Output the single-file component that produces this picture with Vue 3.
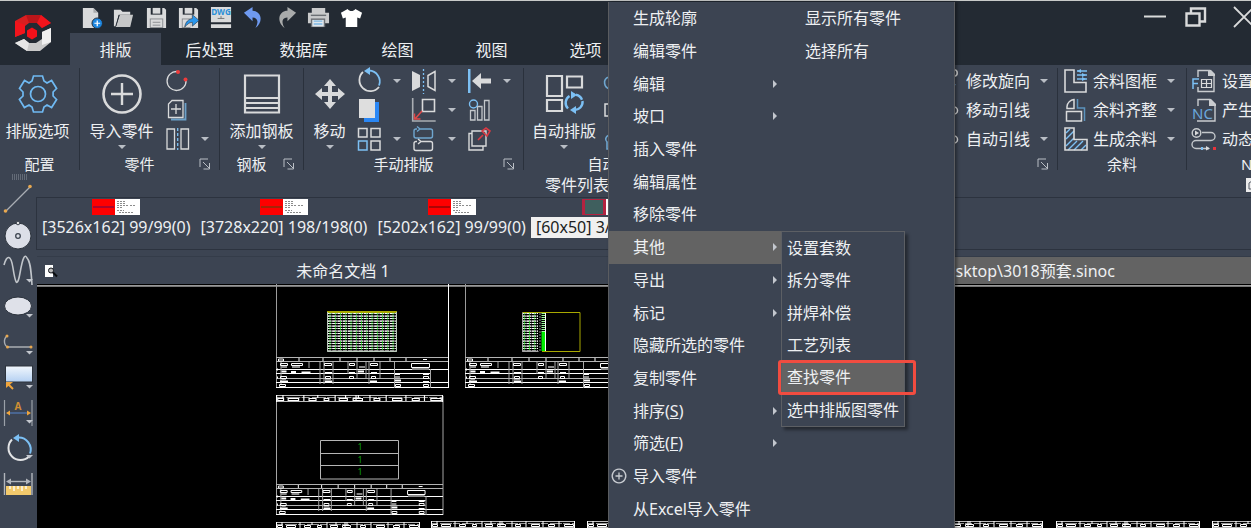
<template>
  <div class="app">
    <header class="header">
      <div class="logo">
        <svg width="38" height="38" viewBox="0 0 38 38" aria-hidden="true">
          <path d="M1 7 12 1h15L15 9l-4 3v7L1 23z" fill="#d81e20" />
          <path d="M12 1h15l10 8-9 5-5-5h-8z" fill="#b9151a" />
          <path d="M27 1l10 8-9 5-5-5z" fill="#f2141c" />
          <path d="M1 7l10 4v8L1 23z" fill="#f2141c" />
          <path d="M18 13.500l5 3v6l-5 3-5-3v-6z" fill="#f5101a" />
          <path d="M28 18l9-4v14l-11 9H13L1 29l9-4 5 4h7l6-4z" fill="#c9c9c9" />
          <path d="M1 29l9-4 5 4-2 8z" fill="#e6e6e6" />
          <path d="M28 18l9-4v14l-9 3z" fill="#f0f0f0" />
        </svg>
      </div>
      <div class="header-main">
        <div class="title-row">
          <div class="quick">
            <button v-for="q in quickTools" :key="q.icon" type="button" class="quick-btn" :aria-label="q.label">
              <svg width="24" height="24" viewBox="0 0 24 24" v-html="icons[q.icon]"></svg>
            </button>
          </div>
          <div class="window-btns">
            <button v-for="w in windowButtons" :key="w.icon" type="button" class="window-btn" :aria-label="w.label">
              <svg width="24" height="24" viewBox="0 0 24 24" v-html="icons[w.icon]"></svg>
            </button>
          </div>
        </div>
        <nav class="tabs">
          <button
            v-for="tab in tabs"
            :key="tab"
            type="button"
            :class="['tab', { active: tab === activeTab }]"
            @click="activeTab = tab"
          >{{ tab }}</button>
        </nav>
      </div>
    </header>

    <section class="ribbon">
      <div v-for="g in groups" :key="g.title" :class="['group', g.name]">
        <div class="group-body">
          <button v-if="g.big" type="button" class="big-btn">
            <svg width="44" height="40" viewBox="0 0 44 40" aria-hidden="true" v-html="icons[g.big.icon]"></svg>
            <span class="big-label">{{ g.big.label }}</span>
            <i v-if="g.big.arrow" class="caret"></i>
          </button>
          <div v-for="(col, ci) in g.cols" :key="ci" class="col">
            <button v-for="b in col" :key="b.icon" type="button" class="tool" :aria-label="b.name || b.label">
              <svg width="28" height="28" viewBox="0 0 28 28" aria-hidden="true" v-html="icons[b.icon]"></svg>
              <span v-if="b.label" class="tool-label">{{ b.label }}</span>
              <span class="tool-arrow"><i v-if="b.arrow" class="caret"></i></span>
            </button>
          </div>
        </div>
        <div class="group-foot">
          <span class="group-title">{{ g.title }}</span>
          <button v-if="g.launcher" type="button" class="launcher" :aria-label="g.title + '设置'">
            <svg width="12" height="12" viewBox="0 0 12 12">
              <path d="M1 9V1h8M4 4l6 6M10.500 5v6h-6" fill="none" stroke="#b9bec5" />
            </svg>
          </button>
        </div>
      </div>
    </section>

    <div class="workspace">
      <aside class="side">
        <svg class="grip" width="18" height="6" viewBox="0 0 18 6" aria-hidden="true">
          <path d="M1 1h16M1 3h16M1 5h16" stroke="#8b929c" stroke-dasharray="1 1" />
        </svg>
        <button v-for="s in sideTools" :key="s.icon" type="button" class="side-btn" :aria-label="s.label">
          <svg width="36" height="36" viewBox="0 0 36 36" v-html="icons[s.icon]"></svg>
        </button>
      </aside>

      <main class="main">
        <div class="panel-title">
          <span>零件列表</span>
          <button type="button" class="pin" aria-label="固定">
            <svg width="14" height="14" viewBox="0 0 14 14">
              <path d="M0 0h14v14H0z" fill="#ececec" />
              <path d="M3 5l3-2h5v8H3zM5 7h4M5 9h4" fill="none" stroke="#555b66" />
            </svg>
          </button>
        </div>

        <ul class="parts">
          <li v-for="p in parts" :key="p.text" :class="['part-item', { selected: p.selected }]">
            <svg v-if="!p.selected" width="48" height="16" viewBox="0 0 48 16" aria-hidden="true">
              <path d="M0 0h23v16H0z" fill="#fe0000" />
              <path d="M1 8h21" :stroke="p.line" />
              <path d="M23 0h25v16H23z" fill="#fff" />
              <path d="M25 2.500h5m1 0h2M25 4.500h9M25 6.500h12m1 0h6M25 8.500h5M25 11.500h2m1 0h4M27 13.500h14" stroke="#8b8b8b" stroke-dasharray="2 1" />
            </svg>
            <svg v-else width="48" height="16" viewBox="0 0 48 16" aria-hidden="true">
              <path d="M0 0h48v16H0z" fill="#b32340" />
              <path d="M3 1h18v14H3z" fill="#3f5f5e" />
              <path d="M24 0h24v16H24z" fill="#fff" />
            </svg>
            <span class="part-text">{{ p.text }}</span>
          </li>
        </ul>

        <div class="docs">
          <button type="button" class="doc">
            <svg class="doc-icon" width="14" height="14" viewBox="0 0 14 14" aria-hidden="true">
              <path d="M1 1h8v12H1z" fill="#fff" />
              <circle cx="7" cy="6.500" r="2.500" fill="#bbb" stroke="#15181d" />
              <path d="M9 8.500l4 4" stroke="#0b0d10" stroke-width="2" />
            </svg>
            未命名文档 1
          </button>
          <button type="button" class="doc current">C:\Users\Administrator\Desktop\3018预套.sinoc</button>
        </div>

        <div class="canvas">
          <svg class="drawing" viewBox="37 284 1214 244" preserveAspectRatio="xMinYMin slice">
            <defs>
              <pattern id="nest" x="327" y="313" width="5.250" height="5" patternUnits="userSpaceOnUse">
                <path d="M0 .5h4.600" stroke="#fff" />
                <path d="M0 2.500h4.600" stroke="#9c9c9c" />
                <path d="M0 3.500h4.600" stroke="#d8d8d8" />
                <path d="M3 0v5" stroke="#18d818" stroke-width=".8" stroke-dasharray="2 1" />
              </pattern>
              <!-- 图框标题栏 -->
              <g id="sheet" fill="none" stroke="#fff">
                <path d="M0 12.500h172M0 16.500h154M0 25.500h172M0 30.500h172" />
                <path d="M0 .5h172M0 4.500h172M0 21.500h154" stroke="#b4b4b4" />
                <path d="M2.500 2h5v2h-5zM23 1v3M47 1v3M64 1v3M81 1v3M98 1v3M114 1v3M130 1v3M147 2.500h4" />
                <path d="M5 5v22M33 5v6M44 5v22M48 5v22M57 5v22M72 5v12M81 5v16M90 5v16M93 5v22M104 5v16M118.500 5v26M154.500 12v19" stroke="#a8a8a8" />
                <path d="M4.500 6.500h7v2h-7zM15.500 6.500h11v2h-11zM48.500 6.500h7v2h-7zM73.500 6.500h5v2h-5zM94.500 6.500h7v2h-7zM135.500 6.500h18v4h-18z" />
                <path d="M5 10h6M16 10h8M83 10h6M136 12h17M49 22h6M6 22h4M119 20h5" stroke="#888" stroke-width="2" />
                <path d="M5.500 14.500h5M15 15h5M25.500 15.500h9M49 16h7M73 16h6M82 14.500h6M95 16h6M119 17h5M147 17h6" stroke-width="2" />
                <path d="M4.500 19.500h6v2h-6zM49.500 19.500h5v2h-5zM73.500 19.500h4v2h-4zM95.500 19.500h4v2h-4zM147.500 19.500h5v2h-5z" />
                <path d="M4 24.500h8M49 24.500h7M94 24.500h7M119 23.500h6M147 25h6M1 12.500h1M1 20.500h1" stroke-width="2" />
                <path d="M3.500 27.500h6v2h-6zM119.500 27.500h5v2h-5zM147.500 27.500h5v2h-5z" />
              </g>
              <g id="strip" fill="none" stroke="#fff">
                <path d="M0 .5h144M0 6.500h144" stroke="#bbb" />
                <path d="M0 2.500h144" stroke="#999" stroke-dasharray="7 2 12 1" />
                <path d="M1.500 3.500h5v2h-5zM10.500 3.500h9v2h-9zM28.500 3.500h6v2h-6zM41.500 3.500h4v2h-4zM54.500 3.500h7v2h-7zM66.500 3.500h8v2h-8zM84.500 3.500h5v2h-5zM100.500 3.500h8v2h-8zM117.500 3.500h6v2h-6zM133.500 3.500h9v2h-9z" />
                <path d="M6 0v3M24 0v6M36 0v3M51 0v6M60 0v3M69 0v6M71 0v3M81 0v6M95 0v6M112 0v6M128 0v6M143.500 0v7M.5 0v7" />
              </g>
            </defs>
            <path d="M37 285.500h1214" stroke="#999" />
            <path d="M37 286.500h1214" stroke="#777" />

            <path d="M276.500 284v104" stroke="#9c9c9c" />
            <path d="M448.500 284v104" stroke="#fff" />
            <use href="#sheet" x="276" y="357" />
            <path d="M327 313h70v38.500h-70z" fill="url(#nest)" />
            <path d="M327 312h70" stroke="#e0e000" stroke-width="1.500" />
            <path d="M327.500 312v39.500h69V312" fill="none" stroke="#b9c9b9" />

            <path d="M465.500 284v104" stroke="#9c9c9c" />
            <use href="#sheet" x="465" y="357" />
            <path d="M522 313h16v38.500h-16z" fill="url(#nest)" />
            <path d="M540 313v38" stroke="#8b8b8b" stroke-dasharray="2 1" />
            <path d="M543.500 313v20" stroke="#9dff9d" stroke-width="4" stroke-dasharray="1 1" />
            <path d="M543.500 332v19" stroke="#00f000" stroke-width="4" />
            <path d="M545.500 313v38" stroke="#fff" />
            <path d="M522.500 312.500h57.500v39h-38" fill="none" stroke="#a8a800" />
            <path d="M522.500 312.500v39h16" fill="none" stroke="#a5a5a5" />

            <path d="M276.500 396v119M443 396v119" stroke="#a5a5a5" />
            <g transform="translate(276 395) scale(1.160 1)"><use href="#strip" /></g>
            <g transform="translate(276 484) scale(.971 1)"><use href="#sheet" /></g>
            <path d="M320.500 440.500h78v38.500h-78zM320.500 453.500h78M320.500 465.500h78" fill="none" stroke="#b5b5b5" />
            <g class="count">
              <text x="360" y="450">1</text>
              <text x="360" y="463">1</text>
              <text x="360" y="475">1</text>
            </g>
            <use href="#strip" x="276" y="522" />
            <use href="#strip" x="431" y="521" />
            <use href="#strip" x="587" y="521" />
            <use href="#strip" x="899" y="521" />
            <use href="#strip" x="1056" y="521" />
            <use href="#strip" x="1212" y="521" />
          </svg>
        </div>
      </main>
    </div>

    <!-- 零件右键菜单 -->
    <div class="menu">
      <ul class="menu-col">
        <li v-for="m in menuItems" :key="m.label" :class="['menu-item', { open: m.children }]">
          <button type="button" class="menu-btn">
            <svg v-if="m.icon" class="menu-icon" width="16" height="16" viewBox="0 0 16 16" aria-hidden="true">
              <path d="M8 1.200a6.800 6.800 0 1 0 .01 0zM8 4.500v7M4.500 8h7" fill="none" stroke="#c9cdd2" stroke-width="1.300" />
            </svg>
            <span>{{ m.label }}<template v-if="m.key">(<u>{{ m.key }}</u>)</template></span>
            <i v-if="m.arrow" class="menu-arrow"></i>
          </button>
          <ul v-if="m.children" class="submenu">
            <li v-for="c in m.children" :key="c" :class="['sub-item', { marked: c === '查找零件' }]">
              <button type="button" class="sub-btn">{{ c }}</button>
            </li>
          </ul>
        </li>
      </ul>
      <ul class="menu-col">
        <li v-for="m in menuItemsRight" :key="m" class="menu-item">
          <button type="button" class="menu-btn">{{ m }}</button>
        </li>
      </ul>
    </div>
  </div>
</template>

<script setup>
import { ref } from 'vue'

const W = '#d9dadb'
const B = '#7cc0f4'
const stroke = (d, color = W, width = 1.5) =>
  `<path d="${d}" fill="none" stroke="${color}" stroke-width="${width}"/>`
const fill = (d, color = W) => `<path d="${d}" fill="${color}"/>`
const sideArrow = (y) => fill(`M26 ${y}h7l-3.500 3.500z`, '#c3c7ce')

const icons = {
  // 快速访问
  newFile: fill('M3 2h11l5 5v16H3z') + fill('M14 2l5 5h-5z', '#a9abad') +
    '<circle cx="18" cy="18" r="5.500" fill="#1c86e0" stroke="#232a33"/>' + stroke('M18 15v6M15 18h6', '#fff', 1.3),
  folder: fill('M2 4h7l2 2h8v3H7L4 21H2z') + fill('M8 9h14l-3 13H4z', '#c6c7c8') + stroke('M7.500 9.500L4 21', '#232a33', 1),
  save: fill('M2 2h18l2 2v19H2z') + fill('M6 2h12v7H6z', '#232a33') + fill('M8 2h8v6H8z') +
    fill('M5 13h14v10H5z', '#8b8e92') + fill('M6 14h12v8H6z') + stroke('M8 17h8M8 20h8', '#8b8e92', 1),
  saveAs: fill('M2 2h18l2 2v19H2z') + fill('M6 2h12v7H6z', '#232a33') + fill('M8 2h8v6H8z') +
    fill('M5 13h9v10H5z', '#8b8e92') + fill('M6 14h8v8H6z') +
    '<path d="M8 22c1-6 4-8 8-9v-4l7 6-7 6v-4c-3 0-5 2-8 5z" fill="#2a96ec" stroke="#232a33" stroke-width=".6"/>',
  dwg: fill('M1 1h21v16H1zM1 19h21v4H1z') + stroke('M8 13h7M11.500 10.500v3', '#777', 1) +
    '<text x="11.500" y="9.500" font-size="8.500" font-weight="700" text-anchor="middle" fill="#2a8fd8">DWG</text>',
  undo: fill('M2 7l9-6v4c9 0 12 11 3 18 4-7 2-11-3-11v4z', '#6f9af0'),
  redo: fill('M22 7l-9-6v4c-9 0-12 11-3 18-4-7-2-11 3-11v4z', '#a9abab'),
  print: fill('M5 2h14v5H5zM1 7h22v11H1z', '#c9cacb') + fill('M4 9h16v1.500H4z', '#6c7075') +
    fill('M4 13h15v9H4z', '#6c7075') + fill('M5.500 14.500h12v7h-12z', '#dfe6ec') + fill('M7 15h9v1.500H7zM7 18h9v1.500H7z', '#7fb8e2'),
  shirt: fill('M8 3c2 3 6 3 8 0l7 4-2 6-3-1v10H6V12l-3 1-2-6z', '#fff'),
  // 窗口按钮
  minimize: stroke('M1 11.500h22', W, 2),
  restore: stroke('M-1.500 8.500h13v12h-13zM3 8V3.500h14v13h-5', W, 2.4),
  close: stroke('M1 2l20 20M21 2L1 22', W, 1.8),
  // 大图标
  gear: stroke('M17.500 2h9l1.500 5 3 2 4.600-2.500 5 8-3.500 3.500v4l3.500 3.500-5 8L31 31l-3 2-1.500 5h-9L16 33l-3-2-4.600 2.500-5-8L7 22v-4l-3.500-3.500 5-8L13 9l3-2z', '#6fb9f2', 1.7) +
    '<circle cx="22" cy="20" r="7.500" fill="none" stroke="#6fb9f2" stroke-width="1.700"/>',
  plus: '<circle cx="22" cy="20" r="18.500" fill="none" stroke="#d9dadb" stroke-width="2.600"/>' + stroke('M22 9v22M11 20h22', W, 2.4),
  plate: stroke('M5 1.500h34v37H5z', W, 2.2) + stroke('M5 24h34M5 29h34M5 34h34', W, 1.8),
  move: fill('M22 5l6 7h-4v6h6v-4l7 6-7 6v-4h-6v6h4l-6 7-6-7h4v-6h-6v4l-7-6 7-6v4h6v-6h-4z'),
  auto: stroke('M5 2h15v20H5zM25 2.500h15v11H25zM5 26h15v11H5z', W, 2.2) +
    stroke('M26 34.500A8 8 0 0 1 27.500 22M32 36a8 8 0 0 0 8.500-9M32.500 20.500a8 8 0 0 0-3 .7', '#7cc0f4', 2.4) +
    stroke('M34 20.800a8 8 0 0 1 6 5', B, 2.4) + fill('M29 17v8l6-4zM34 40v-8l-6 4z', B),
  // 零件
  arc: '<path d="M14 4.500A9.500 9.500 0 1 0 23 13" fill="none" stroke="#d9dadb" stroke-width="1.300"/><circle cx="15" cy="5" r="2" fill="#ef3b3b"/><circle cx="22.500" cy="12.500" r="2" fill="#ef3b3b"/>',
  addPart: stroke('M8 23.500h14.500V7', '#6ba0c8', 1.8) + stroke('M9 4.500h11v17H5.500V8zM13 8v10M8 13h10', W, 1.3),
  mirrorPart: stroke('M4 4h7.500v20H4zM18 4h7.500v20H18z', W, 1.3) + '<path d="M14.700 3v22" stroke="#7cc0f4" stroke-width="1.300" stroke-dasharray="3 2"/>',
  // 手动排版
  rotate: '<path d="M8 5a11 11 0 1 0 16 15" fill="none" stroke="#d9dadb" stroke-width="1.800"/><path d="M14 3.500a11 11 0 0 1 10 15" fill="none" stroke="#7cc0f4" stroke-width="1.800"/>' + fill('M9 4l6-4v8z', B),
  copy: fill('M9 6h15v20H9z', '#2a87f5') + fill('M4 3h16v19H4z', '#dedede'),
  grid: stroke('M3.500 3.500h8.500v8.500H3.500zM16 3.500h9v8.500h-9zM16 16h9v9h-9z', W, 1.5) + stroke('M3.500 16h8.500v9H3.500z', B, 1.5),
  flip: fill('M2 4l8 4v12l-8 4z') + stroke('M25 4.500l-7 4v11l7 4z', W, 1.5) + '<path d="M13.500 2v25" stroke="#7cc0f4" stroke-width="1.300" stroke-dasharray="2 2"/>',
  place: stroke('M2.700 2v23h23', '#a9adb3', 1.6) + stroke('M12.500 3.500h12v12h-12z', W, 1.6) + stroke('M12 15l-7 8M4.500 17.500V23h6', '#e04848', 1.5),
  swap: stroke('M10 4h10.500a2 2 0 0 1 2 2v5a2 2 0 0 1-2 2H6a2 2 0 0 1-2-2V6a2 2 0 0 1 2-2h1M7 1.500l3 2.500-3 2.500', '#6fa6cf', 1.4) +
    stroke('M11 16.500h9.500a2 2 0 0 1 2 2v5a2 2 0 0 1-2 2H6a2 2 0 0 1-2-2v-5a2 2 0 0 1 2-2h1M8 14l3 2.500L8 19', W, 1.4),
  alignLeft: fill('M3 2h2.500v24H3z', B) + fill('M7 14l9-8v5.500h10v5H16V22z'),
  bars: stroke('M5.500 14.500h4.500v9.500H5.500zM12.500 10.500h4.500V24h-4.500zM19.500 4.500h4.500V24h-4.500z', '#c3c7cb', 1.3) + '<circle cx="8.500" cy="8" r="4" fill="none" stroke="#7cc0f4" stroke-width="1.400"/>',
  pinSheet: stroke('M7 6h14v15H7zM7 8.500H4V25h14v-4', W, 1.4) + stroke('M13 15l5-5M17 6l5 5 3-5-4-3z', '#d93a44', 1.6),
  // 自动排版
  cloud: stroke('M8 6a7 7 0 0 0-3 4c-7 2-5 11 1 12h10', '#6fa6cf', 1.6),
  box: stroke('M1 8h14v12H1z', W, 1.5),
  puzzle: stroke('M12 4H5v6c-4 2-4 5-2 7v7h9', '#6fa6cf', 1.6),
  // 引线
  turn: '<circle cx="19" cy="6" r="3.200" fill="none" stroke="#d9dadb" stroke-width="1.500"/>' + stroke('M20 17l-2 4', B, 1.5) + stroke('M4 20l12-11', W, 1.3),
  lead: '<circle cx="19" cy="14.500" r="3.500" fill="none" stroke="#d9dadb" stroke-width="1.500"/>' + stroke('M4 14.500h11', W, 1.3),
  leadAuto: '<circle cx="19" cy="14.500" r="3.500" fill="none" stroke="#d9dadb" stroke-width="1.500"/>' + stroke('M4 14.500h11', W, 1.3),
  // 余料
  frame: stroke('M3 3h9v12.500h12V25H3z', W, 1.6) + stroke('M15 4h10M15 8h10M15 12h10', B, 1.3) + fill('M15 4l4-2v4zM24 8l-4-2v4zM24 12l-4-2v4z', B),
  trim: stroke('M12 12.500V3.500a8 8 0 0 0-7 7v2zM4.500 15.500h15v9.500h-15z', W, 1.5) + stroke('M15.500 3v9h7v13', '#5b93bd', 1.5),
  hatch: stroke('M4 14l8-8M4 21l8-8M6 25l9-9M12 25l9-9M19 25l5-5M4 8l4-4', B, 1.4) + stroke('M3 3h9v11.500h13V25H3z', W, 1.6),
  // NC
  ncSet: stroke('M7 10V3.500h12l4 4V24.500H7V20', '#c9cccf', 1.4) + fill('M17 3h3l4 4v2h-7z', '#c9cccf') +
    stroke('M10.500 12.500h10v8h-10zM10.500 16.500h10M15.500 12.500v8', W, 1.2) + stroke('M2 22V12h6M2 16.500h5', B, 1.5),
  ncMake: stroke('M7 11V3.500h12l5 5V25H6', '#c9cccf', 1.4) + fill('M18 3h2l5 5v2h-7z', '#c9cccf') +
    '<rect x="1" y="10" width="20" height="13" fill="#3c4452"/>' +
    '<text x="11.500" y="22.500" font-size="15" text-anchor="middle" fill="#6ba8dc">NC</text>',
  ncPlay: '<circle cx="5.500" cy="8" r="4.300" fill="none" stroke="#c9cccf" stroke-width="1.400"/>' + fill('M4 5.500l4 2.500-4 2.500z') +
    stroke('M11 7.500h9a4 4 0 0 1 0 8H5a4 4 0 0 0 0 8h13', '#c3c7cb', 1.4) + fill('M15 21l4 2.500-4 2z') +
    fill('M10 22h2v3h-2z', B) + fill('M22 22h3v3h-3z', '#e8343c'),
  // 左侧绘图工具
  line: stroke('M6 31L30 7', '#a9adb3', 1.3) + '<circle cx="5.500" cy="31" r="1.800" fill="#e8a850"/><circle cx="30" cy="6.500" r="1.800" fill="#e8a850"/>',
  disc: '<circle cx="18" cy="20" r="13" fill="#dcdfe8" stroke="#2c333d"/><circle cx="18" cy="20" r="2.300" fill="none" stroke="#3b434f" stroke-width="1.300"/><circle cx="18" cy="7" r="1.800" fill="#ddd" stroke="#3b434f"/>',
  spline: stroke('M4 13C7 2 11 3 13 16s4 22 7 5 5-19 7-15c3 3 4 10 5 27', '#c1c5ca', 1.6) + sideArrow(27),
  ellipse: '<ellipse cx="18" cy="18" rx="13.500" ry="9" fill="#dfe1e9" stroke="#2c333d"/>' + sideArrow(26),
  fillet: stroke('M7 12c-4 3-3 10 1 11h23', '#a9adb3', 1.4) +
    '<circle cx="7" cy="12" r="1.500" fill="#e8a850"/><circle cx="7.500" cy="23" r="1.500" fill="#e8a850"/><circle cx="31" cy="23" r="1.500" fill="#e8a850"/>' + sideArrow(27),
  rect: '<defs><linearGradient id="sky" x2="0" y2="1"><stop stop-color="#f2f7fd"/><stop offset="1" stop-color="#b4d0f2"/></linearGradient></defs><rect x="5.500" y="6" width="27" height="16" fill="url(#sky)" stroke="#2c333d"/>' +
    stroke('M8 24l5 5', '#f0a53c', 2) + fill('M6 22h7l-7 6z', '#f0a53c') + sideArrow(25),
  dim: stroke('M4.500 4v26M32 4v26', '#9aa0a8', 1.2) + stroke('M7 17h22', '#4f74ac', 1.4) + fill('M6 17l4-2.500v5zM31 17l-4-2.500v5z', '#f0a53c') +
    '<text x="18" y="14" font-size="10" font-weight="700" text-anchor="middle" fill="#cf8f34">A</text>' + sideArrow(24),
  spin: '<path d="M12 7.500a12 12 0 1 0 17 17" fill="none" stroke="#e2e3e5" stroke-width="2"/><path d="M18 5.500a12 12 0 0 1 12 16" fill="none" stroke="#7cc0f4" stroke-width="2"/>' + fill('M13 6l6-4v8z', B) + sideArrow(23),
  ruler: stroke('M4.500 5v22M32 5v22', '#b1b5bb', 1.4) + stroke('M9 13.500h18', '#b1b5bb', 1.4) + fill('M6 13.500l5-3v6zM31 13.500l-5-3v6z', '#b1b5bb') +
    fill('M6 18h25v9H6z', '#f3ca6c') + stroke('M10 18v3M14 18v5M18 18v3M22 18v5M26 18v3', '#fff', 1.3)
}

const quickTools = [
  { icon: 'newFile', label: '新建' },
  { icon: 'folder', label: '打开' },
  { icon: 'save', label: '保存' },
  { icon: 'saveAs', label: '另存为' },
  { icon: 'dwg', label: '导出DWG' },
  { icon: 'undo', label: '撤销' },
  { icon: 'redo', label: '重做' },
  { icon: 'print', label: '打印' },
  { icon: 'shirt', label: '皮肤' }
]

const windowButtons = [
  { icon: 'minimize', label: '最小化' },
  { icon: 'restore', label: '还原' },
  { icon: 'close', label: '关闭' }
]

const tabs = ['排版', '后处理', '数据库', '绘图', '视图', '选项']
const activeTab = ref('排版')

const groups = [
  { name: 'config', title: '配置', big: { icon: 'gear', label: '排版选项' } },
  {
    name: 'part',
    title: '零件',
    launcher: true,
    big: { icon: 'plus', label: '导入零件', arrow: true },
    cols: [[
      { icon: 'arc', name: '圆弧' },
      { icon: 'addPart', name: '添加零件' },
      { icon: 'mirrorPart', name: '镜像零件', arrow: true }
    ]]
  },
  { name: 'steel', title: '钢板', launcher: true, big: { icon: 'plate', label: '添加钢板', arrow: true } },
  {
    name: 'manual',
    title: '手动排版',
    launcher: true,
    big: { icon: 'move', label: '移动', arrow: true },
    cols: [
      [
        { icon: 'rotate', name: '旋转', arrow: true },
        { icon: 'copy', name: '复制' },
        { icon: 'grid', name: '阵列', arrow: true }
      ],
      [
        { icon: 'flip', name: '镜像', arrow: true },
        { icon: 'place', name: '定位', arrow: true },
        { icon: 'swap', name: '交换', arrow: true }
      ],
      [
        { icon: 'alignLeft', name: '左对齐', arrow: true },
        { icon: 'bars', name: '排列' },
        { icon: 'pinSheet', name: '固定' }
      ]
    ]
  },
  {
    name: 'auto',
    title: '自动排版',
    launcher: true,
    big: { icon: 'auto', label: '自动排版', arrow: true },
    cols: [[
      { icon: 'cloud', name: '云排版' },
      { icon: 'box', name: '包络' },
      { icon: 'puzzle', name: '组合' }
    ]]
  },
  {
    name: 'leads',
    title: '引线',
    launcher: true,
    cols: [[
      { icon: 'turn', label: '修改旋向', arrow: true },
      { icon: 'lead', label: '移动引线' },
      { icon: 'leadAuto', label: '自动引线', arrow: true }
    ]]
  },
  {
    name: 'remnant',
    title: '余料',
    cols: [[
      { icon: 'frame', label: '余料图框', arrow: true },
      { icon: 'trim', label: '余料齐整', arrow: true },
      { icon: 'hatch', label: '生成余料', arrow: true }
    ]]
  },
  {
    name: 'nc',
    title: 'NC',
    cols: [[
      { icon: 'ncSet', label: '设置参数' },
      { icon: 'ncMake', label: '产生代码' },
      { icon: 'ncPlay', label: '动态模拟' }
    ]]
  }
]

const sideTools = [
  { icon: 'line', label: '直线' },
  { icon: 'disc', label: '圆' },
  { icon: 'spline', label: '样条曲线' },
  { icon: 'ellipse', label: '椭圆' },
  { icon: 'fillet', label: '圆角' },
  { icon: 'rect', label: '矩形' },
  { icon: 'dim', label: '标注' },
  { icon: 'spin', label: '旋转' },
  { icon: 'ruler', label: '测量' }
]

const parts = [
  { text: '[3526x162] 99/99(0)', line: '#5a0a5a' },
  { text: '[3728x220] 198/198(0)', line: '#4a4a10' },
  { text: '[5202x162] 99/99(0)', line: '#5a0a0a' },
  { text: '[60x50] 3/10000(0)', selected: true }
]

const menuItems = [
  { label: '生成轮廓' },
  { label: '编辑零件' },
  { label: '编辑', arrow: true },
  { label: '坡口', arrow: true },
  { label: '插入零件' },
  { label: '编辑属性' },
  { label: '移除零件' },
  {
    label: '其他',
    arrow: true,
    children: ['设置套数', '拆分零件', '拼焊补偿', '工艺列表', '查找零件', '选中排版图零件']
  },
  { label: '导出', arrow: true },
  { label: '标记', arrow: true },
  { label: '隐藏所选的零件' },
  { label: '复制零件' },
  { label: '排序', key: 'S', arrow: true },
  { label: '筛选', key: 'F', arrow: true },
  { label: '导入零件', icon: true },
  { label: '从Excel导入零件' }
]

const menuItemsRight = ['显示所有零件', '选择所有']
</script>

<style>
body {
  margin: 0;
  background: #3c4452;
}
</style>

<style scoped>
.app {
  position: relative;
  display: flex;
  flex-direction: column;
  height: 100vh;
  overflow: hidden;
  background: #3c4452;
  color: #eef0f2;
  font-family: "Noto Sans", "Noto Sans CJK SC", sans-serif;
  font-size: 16px;
  line-height: 20px;
}

button {
  padding: 0;
  border: none;
  background: none;
  color: inherit;
  font: inherit;
  white-space: nowrap;
}

svg {
  display: block;
  flex: none;
  overflow: visible;
}

ul {
  margin: 0;
  padding: 0;
  list-style: none;
}

.caret {
  display: block;
  border: 4px solid transparent;
  border-top-color: #b9bec5;
  border-bottom: none;
}

/* 标题栏 */
.header {
  display: flex;
  flex: none;
  border-top: 1px solid #c8cac9;
  background: #232a33;
}

.logo {
  display: flex;
  justify-content: center;
  width: 70px;
  padding: 13px 4px 0 0;
  box-sizing: border-box;
}

.header-main {
  flex: 1;
  min-width: 0;
}

.title-row {
  display: flex;
  justify-content: space-between;
  height: 32px;
}

.quick {
  display: flex;
  justify-content: space-between;
  width: 292px;
  margin-left: 5px;
}

.quick-btn {
  display: flex;
  align-items: center;
  justify-content: center;
  width: 32px;
}

.quick-btn svg {
  width: 23px;
  height: 23px;
}

.window-btns {
  display: flex;
  margin-right: -16px;
}

.window-btn {
  display: flex;
  align-items: center;
  justify-content: center;
  width: 45px;
}

.tabs {
  display: flex;
  gap: 3px;
}

.tab {
  width: 91px;
  height: 32px;
  padding-top: 2px;
}

.tab.active {
  background: #3c4452;
}

/* 功能区 */
.ribbon {
  display: flex;
  flex: none;
  padding-top: 2px;
  overflow: hidden;
}

.group {
  position: relative;
  display: flex;
  flex-direction: column;
  flex: none;
  box-sizing: border-box;
  border-right: 1px solid transparent;
  border-image: linear-gradient(#3c4452 2px, #2a313c 2px, #2a313c 102px, #3c4452 102px) 1;
}

.config { width: 80px; }
.part { width: 140px; }
.steel { width: 84px; }
.manual { width: 220px; }
.auto { width: 208px; }
.leads { width: 326px; }
.remnant { width: 129px; }
.nc { width: 130px; }

.group-body {
  display: flex;
  height: 86px;
}

.big-btn {
  display: flex;
  flex-direction: column;
  align-items: center;
  width: 83px;
  padding-top: 7px;
}

.config .big-btn {
  width: 75px;
}

.manual .big-btn {
  width: 51px;
}

.auto .big-btn {
  width: 80px;
}

.big-label {
  margin: 7px 0 4px;
}

.col {
  margin-top: -1px;
}

.leads .group-body {
  justify-content: flex-end;
}

.remnant .group-body,
.nc .group-body {
  padding-left: 4px;
}

.tool {
  display: flex;
  align-items: center;
  height: 29px;
}

.tool-label {
  padding-left: 3px;
}

.tool-arrow {
  display: flex;
  justify-content: center;
  width: 27px;
}

.group-foot {
  display: flex;
  align-items: center;
  height: 22px;
}

.group-title {
  flex: 1;
  text-align: center;
  font-size: 15px;
}

.launcher {
  width: 20px;
}

/* 工作区 */
.workspace {
  display: flex;
  flex: 1;
  min-height: 0;
}

.side {
  width: 37px;
  flex: none;
}

.grip {
  margin: -1px 0 0 11px;
}

.side-btn {
  display: block;
}

.main {
  display: flex;
  flex-direction: column;
  flex: 1;
  min-width: 0;
}

.panel-title {
  position: relative;
  padding: 0 134px 2px 0;
  text-align: center;
}

.pin {
  position: absolute;
  top: 3px;
  right: -9px;
}

.parts {
  display: flex;
  height: 50px;
  padding-top: 1px;
  border: 1px solid #2c333f;
  border-right: none;
  margin-left: -1px;
  overflow: hidden;
}

.part-item {
  display: flex;
  flex-direction: column;
  align-items: center;
  white-space: nowrap;
}

.part-text {
  margin-top: 2px;
  padding: 0 5px;
  line-height: 21px;
}

.selected .part-text {
  background: #f0f0f0;
  color: #1b1e22;
}

.docs {
  display: flex;
  margin-top: 6px;
  border-top: 1px solid #343c49;
}

.doc {
  position: relative;
  width: 50%;
  height: 27px;
  padding-left: 5px;
}

.doc.current {
  background: #636363;
  padding: 0 24px 0 0;
}

.doc-icon {
  position: absolute;
  top: 7px;
  left: 7px;
}

.canvas {
  flex: 1;
  min-height: 0;
  overflow: hidden;
  background: #000;
}

.drawing {
  width: 100%;
  height: 100%;
  overflow: hidden;
}

.count {
  fill: #0a9a0a;
  font-size: 9px;
  text-anchor: middle;
}

/* 右键菜单 */
.menu {
  position: absolute;
  top: 2px;
  bottom: 0;
  left: 608px;
  display: flex;
  width: 347px;
  padding-bottom: 3px;
  box-sizing: border-box;
  border: 1px solid #5a5c60;
  border-width: 0 1px;
  background: #3c4452;
  box-shadow: 2px 0 3px rgba(0, 0, 0, 0.4);
}

.menu-col {
  display: grid;
  grid-template-rows: repeat(16, 1fr);
  width: 172px;
}

.menu-item {
  position: relative;
}

.menu-item.open {
  background: #636363;
}

.menu-btn {
  display: flex;
  align-items: center;
  width: 100%;
  height: 100%;
  padding-left: 24px;
}

.menu-icon {
  position: absolute;
  left: 2px;
}

.menu-arrow {
  margin: 0 4px 0 auto;
  border: 4px solid transparent;
  border-left-color: #c3c7ce;
  border-right: none;
}

.submenu {
  position: absolute;
  top: 0;
  left: 100%;
  z-index: 1;
  display: grid;
  grid-template-rows: repeat(6, 1fr);
  height: 600%;
  width: 124px;
  box-sizing: border-box;
  border: 1px solid #5c5f64;
  background: #3c4452;
  box-shadow: 3px 3px 3px rgba(0, 0, 0, 0.4);
}

.sub-item {
  position: relative;
}

.sub-btn {
  width: 100%;
  height: 100%;
  padding-left: 5px;
  text-align: left;
}

.sub-item.marked {
  background: #636363;
}

.sub-item.marked::after {
  content: "";
  position: absolute;
  inset: -1px -12px -1px -4px;
  border: 3px solid #f14c40;
  border-radius: 3px;
}
</style>
